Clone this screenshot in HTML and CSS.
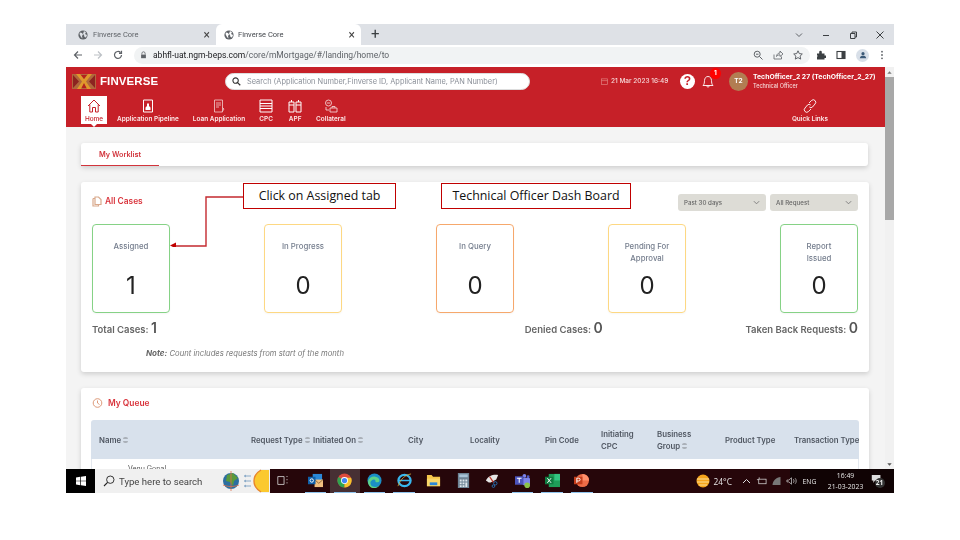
FILE: index.html
```html
<!DOCTYPE html>
<html lang="en">
<head>
<meta charset="utf-8">
<title>Finverse Core</title>
<link rel="stylesheet" href="styles.css">
</head>
<body>
<div class="slide">
  <div class="window">
    <div class="tabstrip">
      <div class="tab">
        <svg class="globe" viewBox="0 0 10 10"><circle cx="5" cy="5" r="4.6" fill="#5f6368"/><path d="M2 2.500l2 .5 1 1.500-1 1.500.5 2.500-1.500-1.500-1.500-3zM6 1l2 1.500-1 1.500 2 1-1 2.500-1.500-.5-.5-2-1-1z" fill="#dee1e6"/></svg>
        <span class="tabtitle">Finverse Core</span><span class="tabx">×</span>
      </div>
      <div class="tab tab-active">
        <svg class="globe" viewBox="0 0 10 10"><circle cx="5" cy="5" r="4.6" fill="#5f6368"/><path d="M2 2.500l2 .5 1 1.500-1 1.500.5 2.500-1.500-1.500-1.500-3zM6 1l2 1.500-1 1.500 2 1-1 2.500-1.500-.5-.5-2-1-1z" fill="#fff"/></svg>
        <span class="tabtitle">Finverse Core</span><span class="tabx">×</span>
      </div>
      <span class="newtab">+</span>
      <div class="winctl">
        <svg viewBox="0 0 10 10"><path d="M2 3.500l3 3 3-3" fill="none" stroke="#5f6368"/></svg>
        <svg viewBox="0 0 10 10"><path d="M2 5.500h6" stroke="#3c4043"/></svg>
        <svg viewBox="0 0 10 10"><path d="M2.500 3.500h4.500v5h-4.500zM4 3.500v-1.500h4.500v5h-1.500" fill="none" stroke="#3c4043"/></svg>
        <svg viewBox="0 0 10 10"><path d="M1.500 1.500l7 7M8.500 1.500l-7 7" stroke="#3c4043"/></svg>
      </div>
    </div>
    <div class="toolbar">
      <svg class="tb" viewBox="0 0 10 10"><path d="M9 5H1.500M5 1.500L1.500 5 5 8.500" fill="none" stroke="#5f6368" stroke-width="1.200"/></svg>
      <svg class="tb" viewBox="0 0 10 10"><path d="M1 5h7.500M5 1.500L8.500 5 5 8.500" fill="none" stroke="#bdc1c6" stroke-width="1.200"/></svg>
      <svg class="tb" viewBox="0 0 10 10"><path d="M8.500 5A3.500 3.500 0 1 1 7.500 2.500M8.500 .8v2.500H6" fill="none" stroke="#5f6368" stroke-width="1.200"/></svg>
      <div class="omnibox">
        <svg class="lock" viewBox="0 0 8 10"><path d="M2 4.500V3a2 2 0 0 1 4 0v1.500" fill="none" stroke="#5f6368"/><rect x="1" y="4.500" width="6" height="4.500" fill="#5f6368"/></svg>
        <span class="url"><b>abhfl-uat.ngm-beps.com</b>/core/mMortgage/#/landing/home/to</span>
        <span class="omni-icons">
          <svg viewBox="0 0 10 10"><circle cx="4.200" cy="4.200" r="3" fill="none" stroke="#5f6368"/><path d="M6.500 6.500l3 3M3 4.200h2.500" stroke="#5f6368"/></svg>
          <svg viewBox="0 0 10 10"><path d="M1 4.500v4.500h7.500V6.500M3.500 6.500c0-2.500 2-3.500 3.500-3.500V1l3 3-3 2.500V4.800c-1.500 0-2.500.5-3.500 1.700z" fill="none" stroke="#5f6368" stroke-width=".8"/></svg>
          <svg viewBox="0 0 10 10"><path d="M5 .8l1.300 2.800 3 .4-2.200 2.100.6 3L5 7.600 2.300 9.100l.6-3L.7 4l3-.4z" fill="none" stroke="#5f6368"/></svg>
        </span>
      </div>
      <div class="ext-icons">
        <svg viewBox="0 0 10 10"><path d="M1 3.500h2.200V2a1.300 1.300 0 0 1 2.600 0v1.500H8.500v2H10V8H8.500v1.500H1V7a1.300 1.300 0 0 0 0-2z" fill="#3c4043"/></svg>
        <svg viewBox="0 0 10 10"><rect x="1" y="1.500" width="8" height="7" fill="none" stroke="#3c4043" stroke-width="1.100"/><rect x="5.500" y="1.500" width="3.500" height="7" fill="#3c4043"/></svg>
        <span class="profile"><svg viewBox="0 0 10 10"><circle cx="5" cy="3.300" r="2" fill="#3c5a78"/><path d="M1 9c.3-2.500 2-3 4-3s3.700.5 4 3z" fill="#3c5a78"/></svg></span>
        <svg viewBox="0 0 10 10"><circle cx="5" cy="1.700" r=".9" fill="#5f6368"/><circle cx="5" cy="5" r=".9" fill="#5f6368"/><circle cx="5" cy="8.300" r=".9" fill="#5f6368"/></svg>
      </div>
    </div>

    <div class="viewport">
      <div class="page">
        <header class="apphead">
          <div class="headtop">
            <svg class="logo" viewBox="0 0 24 15"><rect width="24" height="15" fill="#b0683c"/><path d="M1 1l6 6.500L1 14zM23 1l-6 6.500 6 6.500z" fill="#8c2420"/><path d="M4 0h4l4 5 4-5h4l-6 7.500 5 7.500h-4l-3-5-3 5H5l5-7.500z" fill="#e0982c"/><path d="M9 1l3 4 3-4zM12 9l-2.500 5h5z" fill="#b3221e"/></svg>
            <span class="brand">FINVERSE</span>
            <div class="search">
              <svg viewBox="0 0 10 10"><circle cx="4" cy="4" r="3" fill="none" stroke="#333" stroke-width="1.200"/><path d="M6.200 6.200l3 3" stroke="#333" stroke-width="1.400"/></svg>
              <span>Search (Application Number,Finverse ID, Applicant Name, PAN Number)</span>
            </div>
            <div class="headright">
              <svg class="cal" viewBox="0 0 8 8"><rect x=".5" y="1" width="7" height="6.500" fill="none" stroke="#e2827f" stroke-width=".8"/><path d="M.5 3h7" stroke="#e2827f" stroke-width=".8"/></svg>
              <span class="datetime">21 Mar 2023 16:49</span>
              <span class="help">?</span>
              <span class="bell">
                <svg viewBox="0 0 12 14"><path d="M1 11.500c1.500-1.500 1.300-3 1.500-5C2.700 4 4 2.500 6 2.500S9.300 4 9.500 6.500c.2 2 0 3.500 1.500 5zM4.700 11.500c0 2 2.600 2 2.600 0" fill="none" stroke="#fff" stroke-width=".9"/></svg>
                <span class="badge">1</span>
              </span>
              <span class="avatar">T2</span>
              <div class="user">
                <div class="uname">TechOfficer_2 27 (TechOfficer_2_27)</div>
                <div class="urole">Technical Officer</div>
              </div>
            </div>
          </div>
          <nav class="nav">
            <a class="navitem navhome">
              <svg viewBox="0 0 14 14"><path d="M1 7l6-6 6 6M2.800 5.500V13H5.500V8.500h3V13h2.700V5.500" fill="none" stroke="#c62028" stroke-width="1"/></svg>
              <span>Home</span>
            </a>
            <a class="navitem">
              <svg viewBox="0 0 12 14"><path d="M1.500 1h9v12h-9z" fill="none" stroke="#fff"/><path d="M3.500 11h5V8.500L7 7V4.500H5V7L3.500 8.500z" fill="#fff"/></svg>
              <span>Application Pipeline</span>
            </a>
            <a class="navitem">
              <svg viewBox="0 0 12 14"><path d="M1.500 1h8v12h-8zM3 4h5M3 6h5M3 8h3" fill="none" stroke="#eebcbc" stroke-width=".9"/><path d="M9 8l2 2-2 3" fill="none" stroke="#eebcbc" stroke-width=".9"/></svg>
              <span>Loan Application</span>
            </a>
            <a class="navitem">
              <svg viewBox="0 0 14 14"><path d="M1 1h12v12H1zM1 4.500h12M1 7h12M1 9.500h12" fill="none" stroke="#fff"/></svg>
              <span>CPC</span>
            </a>
            <a class="navitem">
              <svg viewBox="0 0 14 14"><path d="M1 3h5v10H1zM8 3h5v10H8zM1 6h5M8 6h5M3.500 1v2M10.500 1v2" fill="none" stroke="#fff"/></svg>
              <span>APF</span>
            </a>
            <a class="navitem">
              <svg viewBox="0 0 14 14"><circle cx="4.500" cy="4" r="3" fill="none" stroke="#f2d0d0" stroke-width=".9"/><path d="M3 4h3M6 9h7v4H6zM2 8v3h3M8 9V7.500h3V9" fill="none" stroke="#f2d0d0" stroke-width=".9"/></svg>
              <span>Collateral</span>
            </a>
            <a class="navitem navquick">
              <svg viewBox="0 0 14 14"><path d="M6 4l2.500-2.500a2.300 2.300 0 0 1 3.500 3.500L9.500 8a2.300 2.300 0 0 1-3.200 0M8 10l-2.500 2.500A2.300 2.300 0 0 1 2 9l2.500-3a2.300 2.300 0 0 1 3.200 0" fill="none" stroke="#fff" stroke-width=".9"/></svg>
              <span>Quick Links</span>
            </a>
          </nav>
        </header>

        <main class="content">
          <div class="card worklist"><span class="wltab">My Worklist</span></div>

          <section class="card cases">
            <div class="caseshead">
              <svg class="cardicon" viewBox="0 0 10 11"><path d="M1 2.500h1.500M1 2.500V10h5.500V8.500M3 1h3.500L9 3.500v5H3z" fill="none" stroke="#d9a98c" stroke-width="1.200"/></svg>
              <h2 class="cardtitle">All Cases</h2>
              <div class="selects">
                <div class="select"><span>Past 30 days</span><svg viewBox="0 0 8 8"><path d="M1 2.500l3 3 3-3" fill="none" stroke="#777"/></svg></div>
                <div class="select"><span>All Request</span><svg viewBox="0 0 8 8"><path d="M1 2.500l3 3 3-3" fill="none" stroke="#777"/></svg></div>
              </div>
            </div>
            <div class="tiles">
              <div class="tile green"><div class="tlabel">Assigned</div><div class="tnum">1</div></div>
              <div class="tile yellow"><div class="tlabel">In Progress</div><div class="tnum">0</div></div>
              <div class="tile orange"><div class="tlabel">In Query</div><div class="tnum">0</div></div>
              <div class="tile yellow"><div class="tlabel">Pending For Approval</div><div class="tnum">0</div></div>
              <div class="tile green"><div class="tlabel tnarrow">Report Issued</div><div class="tnum">0</div></div>
            </div>
            <div class="totals">
              <div>Total Cases: <b>1</b></div>
              <div class="tr">Denied Cases: <b>0</b></div>
              <div class="tr">Taken Back Requests: <b>0</b></div>
            </div>
            <p class="note"><b>Note:</b> Count includes requests from start of the month</p>
          </section>

          <section class="card queue">
            <div class="queuehead">
              <svg class="cardicon" viewBox="0 0 10 10"><circle cx="5" cy="5" r="4.300" fill="none" stroke="#d9906c" stroke-width=".9"/><path d="M5 2.500V5l2 1.500" fill="none" stroke="#d9906c" stroke-width=".9"/></svg>
              <h2 class="cardtitle">My Queue</h2>
            </div>
            <div class="qtable">
              <div class="qrow">
                <span>Name <i class="sort"></i></span>
                <span>Request Type <i class="sort"></i></span>
                <span>Initiated On <i class="sort"></i></span>
                <span>City</span>
                <span>Locality</span>
                <span>Pin Code</span>
                <span>Initiating<br>CPC</span>
                <span>Business<br>Group <i class="sort"></i></span>
                <span>Product Type</span>
                <span>Transaction Type</span>
              </div>
              <div class="qbody">Venu Gopal</div>
            </div>
          </section>
        </main>
      </div>
      <div class="scrollbar">
        <svg viewBox="0 0 8 8"><path d="M1.500 5.500L4 2.500l2.500 3z" fill="#777"/></svg>
        <div class="thumb"></div>
        <svg class="scrolldown" viewBox="0 0 8 8"><path d="M1.500 2.500L4 5.500l2.500-3z" fill="#555"/></svg>
      </div>
    </div>

    <footer class="taskbar">
      <div class="start"><svg viewBox="0 0 10 10"><path d="M0 1.400l4.300-.6v3.900H0zM5 .7L10 0v4.700H5zM0 5.300h4.300v3.900L0 8.600zM5 5.300h5V10l-5-.7z" fill="#fff"/></svg></div>
      <div class="tsearch">
        <svg class="tglass" viewBox="0 0 12 12"><circle cx="7.300" cy="4.700" r="3.700" fill="none" stroke="#222" stroke-width=".9"/><path d="M4.600 7.400L1 11" stroke="#222" stroke-width="1.100"/></svg>
        <span class="tstext">Type here to search</span>
        <svg class="tglobe" viewBox="0 0 48 22"><circle cx="10" cy="11" r="8" fill="#2c6fa0"/><path d="M6 5l6-2 5 5-4 3-1 5-3-4-4-1z" fill="#5a9a3c"/><path d="M10 1v20M2 15c5 2 11 2 16 0" stroke="#e0704a" stroke-width=".8" fill="none"/><path d="M30 6h-7M30 11h-7M30 16h-7" stroke="#8aa9c8" stroke-width="1.200"/><path d="M23 6l2-1.500v3zM23 11l2-1.500v3zM23 16l2-1.500v3z" fill="#8aa9c8"/><path d="M48 0H40C35 3 33 7 33 11s2 8 7 11h8z" fill="#fbc92e"/><path d="M40 0C35 3 33 7 33 11s2 8 7 11" fill="none" stroke="#e8852c" stroke-width="1.400"/></svg>
      </div>
      <div class="tapps">
        <span class="tapp taskview"><svg viewBox="0 0 14 14"><path d="M1 2h8v10H1zM12 2h1.500M12 6h1.500M12 10h1.500" fill="none" stroke="#ddd" stroke-width="1"/></svg></span>
        <span class="tapp run"><svg viewBox="0 0 16 16"><rect x="5" y="1" width="10" height="8" fill="#2a88d8"/><rect x="7" y="7" width="9" height="8" fill="#f0c080"/><path d="M7 7l4.500 4L16 7" fill="none" stroke="#8c6a3c"/><rect x="0" y="4" width="8" height="8" fill="#0f5fa8"/><circle cx="4" cy="8" r="1.800" fill="none" stroke="#fff"/></svg></span>
        <span class="tapp run active"><svg viewBox="0 0 16 16"><circle cx="8" cy="8" r="7.500" fill="#dd4b3c"/><path d="M8 8L1.500 4.200A7.500 7.500 0 0 0 8 15.500z" fill="#2ea44f"/><path d="M8 8v7.500A7.500 7.500 0 0 0 15 5H8z" fill="#f6c32c"/><circle cx="8" cy="8" r="3.700" fill="#fff"/><circle cx="8" cy="8" r="2.800" fill="#3f85f4"/></svg></span>
        <span class="tapp run"><svg viewBox="0 0 16 16"><circle cx="8" cy="8" r="7.500" fill="#1b8fc6"/><path d="M1 9c1-4 5-6 8-5 3 .5 5 3 4 5-1 1.500-4 1-4 0 .5-1.500-2-3-4-1-2 1-2 5 1 6.500 2 .8 5 .5 7-1-2 2.500-5 3-7 2.500C3 15.500 1 12 1 9z" fill="#5cd38a"/></svg></span>
        <span class="tapp run"><svg viewBox="0 0 16 16"><ellipse cx="8" cy="8" rx="6.500" ry="6" fill="none" stroke="#38b7ee" stroke-width="2.400"/><path d="M2 8h12" stroke="#38b7ee" stroke-width="1.600"/><path d="M1 14c3-8 8-12 14-13" fill="none" stroke="#e2b53c" stroke-width=".8"/></svg></span>
        <span class="tapp"><svg viewBox="0 0 16 16"><path d="M1 2h5l1.500 2H15v10H1z" fill="#f5c64a"/><rect x="1" y="6" width="14" height="8" fill="#fbd869"/><rect x="4" y="10" width="8" height="3" fill="#2a88d8"/></svg></span>
        <span class="tapp"><svg viewBox="0 0 14 16"><rect x="1" y="0" width="12" height="16" fill="#6f8596"/><rect x="2.500" y="1.500" width="9" height="3" fill="#a8c4d8"/><path d="M3 7h2v2H3zM6 7h2v2H6zM9 7h2v2H9zM3 10h2v2H3zM6 10h2v2H6zM9 10h2v5H9zM3 13h2v2H3zM6 13h2v2H6z" fill="#dfe7ec"/></svg></span>
        <span class="tapp"><svg viewBox="0 0 16 16"><path d="M1 8c2-5 8-7 13-6l-2 5-6 3-2 0z" fill="#e6e6e6"/><path d="M5 4l4 6" stroke="#c0392b" stroke-width="1.400"/><circle cx="11" cy="11" r="1.800" fill="none" stroke="#2a6fb0"/><circle cx="9" cy="14" r="1.400" fill="none" stroke="#2a6fb0"/></svg></span>
        <span class="tapp run"><svg viewBox="0 0 16 16"><circle cx="10" cy="3" r="2" fill="#7b83eb"/><circle cx="14" cy="4" r="1.500" fill="#5059c9"/><rect x="8" y="5" width="8" height="8" rx="1.500" fill="#7b83eb"/><rect x="0" y="3.500" width="9" height="9" fill="#4b53bc"/><path d="M2 5.500h5M4.500 5.500v5" stroke="#fff" stroke-width="1.100"/><circle cx="13" cy="13" r="3" fill="#8bc34a"/></svg></span>
        <span class="tapp run"><svg viewBox="0 0 16 16"><rect x="4" y="1" width="12" height="14" fill="#1f9d58"/><path d="M10 1h6v7h-6z" fill="#33c481"/><rect x="0" y="4" width="9" height="8" fill="#107c41"/><path d="M2.500 5.500l4 5M6.500 5.500l-4 5" stroke="#fff"/></svg></span>
        <span class="tapp run"><svg viewBox="0 0 16 16"><circle cx="9" cy="8" r="7" fill="#ed6c47"/><path d="M9 1a7 7 0 0 1 7 7H9z" fill="#ff8f6b"/><rect x="0" y="4" width="9" height="8" fill="#c43e1c"/><path d="M3 10.500V5.500h2a1.500 1.500 0 0 1 0 3H3" fill="none" stroke="#fff"/></svg></span>
      </div>
      <div class="ttray">
        <svg class="tsun" viewBox="0 0 14 14"><circle cx="7" cy="7" r="6.500" fill="#f6a41c"/><path d="M1 5h12M1 8h12M3 11h8" stroke="#fbe6a8" stroke-width=".9"/></svg>
        <span class="ttemp">24°C</span>
        <svg class="ticon" viewBox="0 0 10 10"><path d="M1.500 7L5 3.500 8.500 7" fill="none" stroke="#ddd"/></svg>
        <svg class="ticon" viewBox="0 0 12 10"><rect x="3" y="3" width="8" height="5" fill="none" stroke="#ddd" stroke-width=".8"/><path d="M3.500 1v2M1 3.500h2" stroke="#ddd" stroke-width=".8"/></svg>
        <svg class="ticon" viewBox="0 0 10 10"><path d="M1 9C1 5 5 1 9 1v8z" fill="#777"/></svg>
        <svg class="ticon" viewBox="0 0 12 10"><path d="M1 4h2l3-2.500v7L3 6H1zM8 3c1 1 1 3 0 4M10 2c1.500 1.500 1.500 4.500 0 6" fill="none" stroke="#ccc" stroke-width=".8"/></svg>
        <span class="tlang">ENG</span>
        <div class="tclock"><div>16:49</div><div>21-03-2023</div></div>
        <span class="tnotif">
          <svg viewBox="0 0 14 12"><path d="M1 1h11v7H5l-2 3V8H1z" fill="#ddd"/></svg>
          <span class="tcount">21</span>
        </span>
      </div>
    </footer>
  </div>

  <div class="callout callout-a">Click on Assigned tab</div>
  <div class="callout callout-b">Technical Officer Dash Board</div>
  <svg class="leader" viewBox="0 0 75 51"><path d="M74 1H37v49H6" fill="none" stroke="#c42a2f" stroke-width="1.400"/><path d="M1 49.500l6-3v6z" fill="#c00000"/></svg>
</div>
</body>
</html>
```

FILE: styles.css
```css
* { box-sizing: border-box; }
html, body { margin: 0; padding: 0; }
body { width: 960px; height: 540px; overflow: hidden; background: #fff; font-family: "Inter", "Liberation Sans", sans-serif; }
svg { display: block; flex: none; }

.slide { position: relative; width: 960px; height: 540px; padding: 24px 66px 47px; }
.window { width: 828px; height: 469px; display: flex; flex-direction: column; overflow: hidden; filter: blur(.45px); background: #fff; }

/* browser chrome */
.tabstrip { height: 21px; background: #dee1e6; display: flex; align-items: flex-end; flex: none; }
.tab { width: 150px; height: 21px; display: flex; align-items: center; padding: 0 6px 0 12px; gap: 5px; color: #5f6368; font: 7.500px "Roboto", sans-serif; }
.tab-active { width: 145px; padding-left: 8px; gap: 4px; background: #fff; border-radius: 6px 6px 0 0; color: #45494e; }
.globe { width: 10px; height: 10px; }
.tabtitle { flex: 1; }
.tabx { font-size: 12px; color: #444; line-height: 1; }
.newtab { font: 15px "Roboto", sans-serif; color: #3c4043; margin-left: 10px; height: 21px; line-height: 21px; }
.winctl { margin-left: auto; height: 21px; display: flex; align-items: center; gap: 17px; padding-right: 9px; }
.winctl svg { width: 10px; height: 10px; }
.toolbar { height: 22px; background: #fff; display: flex; align-items: center; flex: none; padding: 0 0 2px 7px; }
.tb { width: 10px; height: 10px; margin-right: 10px; }
.omnibox { margin-left: 1px; width: 676px; height: 17px; border-radius: 9px; background: #f1f3f4; display: flex; align-items: center; padding: 0 7px 0 6px; }
.lock { width: 7px; height: 8px; margin-right: 6px; }
.url { font: 8.500px "Roboto", sans-serif; color: #5f6368; white-space: nowrap; }
.url b { font-weight: 400; color: #202124; }
.omni-icons { margin-left: auto; display: flex; gap: 10px; }
.omni-icons svg { width: 10px; height: 10px; }
.ext-icons { display: flex; align-items: center; margin-left: 6px; gap: 10px; }
.ext-icons svg { width: 10px; height: 10px; }
.profile { width: 13px; height: 13px; margin-right: -2px; border-radius: 50%; background: #d8dfe8; display: flex; align-items: center; justify-content: center; }
.profile svg { width: 8px; height: 8px; }

.viewport { flex: 1; min-height: 0; display: flex; overflow: hidden; background: #f4f4f4; }
.page { flex: 1; min-width: 0; display: flex; flex-direction: column; }

/* app header */
.apphead { height: 60px; background: #c62028; flex: none; color: #fff; }
.headtop { height: 28px; display: flex; align-items: center; padding-left: 6px; }
.logo { width: 24px; height: 15px; }
.brand { font: 700 11.500px "Liberation Sans", sans-serif; margin-left: 4px; width: 125px; letter-spacing: .1px; }
.search { width: 305px; height: 17px; background: #fff; border-radius: 9px; border: 1px solid #ddd; display: flex; align-items: center; padding-left: 6px; gap: 6px; color: #8a8f98; font-size: 7.400px; white-space: nowrap; }
.search svg { width: 9px; height: 9px; }
.headright { flex: 1; display: flex; align-items: center; padding-left: 71px; }
.cal { width: 7px; height: 7px; margin-right: 3px; }
.datetime { font-size: 6.500px; font-weight: 500; color: #f6d8d8; width: 64px; white-space: nowrap; }
.help { width: 15px; height: 15px; border-radius: 50%; background: #fff; color: #c62028; font: 700 12px/15px "Liberation Sans", sans-serif; text-align: center; margin-left: 5px; }
.bell { position: relative; width: 14px; height: 14px; margin-left: 7px; }
.bell svg { width: 12px; height: 14px; }
.badge { position: absolute; top: -6px; right: -5px; width: 11px; height: 11px; border-radius: 50%; background: #f00; font-size: 6.500px; font-weight: 700; line-height: 11px; text-align: center; color: #fff; }
.avatar { width: 19px; height: 19px; margin-left: 13px; border-radius: 50%; background: #b27d52; font-size: 6.500px; font-weight: 700; line-height: 19px; text-align: center; }
.user { margin-left: 5px; white-space: nowrap; }
.uname { font-size: 6.850px; font-weight: 700; line-height: 9px; }
.urole { font-size: 5.500px; font-weight: 500; line-height: 9px; margin-top: 1px; color: #f6d8d8; }
.nav { height: 32px; display: flex; align-items: flex-start; padding-left: 15px; gap: 10px; }
.navitem { display: flex; flex-direction: column; align-items: center; padding-top: 4px; gap: 2px; font-size: 6.450px; font-weight: 600; color: #fce8e8; white-space: nowrap; }
.navitem svg { width: 14px; height: 14px; }
.navhome { position: relative; width: 26px; height: 28px; background: #fff; color: #c62028; margin-top: 1px; margin-right: 0; font-weight: 500; padding-top: 3px; }
.navhome::after { content: ""; position: absolute; left: 10px; bottom: -3px; border: 3px solid transparent; border-bottom: 0; border-top-color: #fff; }
.navquick { margin-left: auto; margin-right: 57px; }
.navitem:nth-child(3) { margin-left: 4px; }
.navitem:nth-child(4) { margin-left: 4px; }
.navitem:nth-child(5) { margin-left: 5px; }
.navitem:nth-child(6) { margin-left: 4px; }

/* content */
.content { flex: 1; min-height: 0; overflow: hidden; padding: 16px 16px 0 15px; display: flex; flex-direction: column; gap: 16px; }
.card { background: #fff; border-radius: 3px; box-shadow: 0 2px 5px rgba(0,0,0,.16); flex: none; }
.worklist { height: 23px; margin-right: 1px; display: flex; margin-bottom: 0; }
.wltab { width: 78px; text-align: center; font-size: 7.300px; font-weight: 600; color: #d2343c; line-height: 23px; border-bottom: 1px solid #d2343c; }
.cases { height: 190px; padding: 12px 11px 0; }
.caseshead { display: flex; align-items: flex-start; height: 18px; }
.cardicon { width: 10px; height: 11px; margin-right: 3px; }
.cases .cardicon { margin-top: 2px; }
.cardtitle { margin: 0; font-size: 8.400px; line-height: 14px; font-weight: 600; color: #d9343c; }
.selects { margin-left: auto; display: flex; gap: 4px; }
.select { width: 88px; height: 17px; border-radius: 3px; background: #dddcd6; display: flex; align-items: center; justify-content: space-between; padding: 0 6px; font-size: 6.200px; font-weight: 500; color: #666; }
.select svg { width: 7px; height: 7px; }
.tiles { display: flex; justify-content: space-between; margin-top: 12px; }
.tile { width: 78px; height: 89px; border-radius: 4px; border: 1px solid; text-align: center; display: flex; flex-direction: column; box-shadow: 0 1px 2px rgba(0,0,0,.04); }
.green { border-color: #86d286; }
.yellow { border-color: #fdd883; }
.orange { border-color: #f6a86c; }
.tlabel { height: 49px; padding: 15px 10px 0; font-size: 7.800px; line-height: 12px; font-weight: 500; color: #737c8c; }
.tnarrow { padding: 15px 20px 0; }
.tnum { font-size: 24px; font-weight: 400; color: #222; line-height: 24px; margin-top: 0; }
.totals { display: grid; grid-template-columns: repeat(3, 1fr); margin-top: 7px; font-size: 9.500px; font-weight: 600; color: #666; line-height: 16px; }
.totals b { font-size: 14px; font-weight: 600; color: #555; }
.tr { text-align: right; }
.note { margin: 10px 0 0 54px; font-size: 7.700px; font-style: italic; color: #777; line-height: 10px; }
.note b { font-weight: 700; color: #666; font-size: 8px; }
.queue { height: 120px; padding: 8px 10px 0; }
.queuehead { display: flex; align-items: center; height: 14px; margin-bottom: 10px; padding-left: 1px; }
.queuehead .cardicon { height: 10px; width: 11px; margin-right: 5px; }
.qtable { border-radius: 3px 3px 0 0; }
.qrow { height: 39px; background: #d8e1ec; border-radius: 3px 3px 0 0; display: grid; grid-template-columns: 152px 62px 95px 62px 75px 56px 56px 68px 69px 1fr; align-items: center; padding-left: 8px; font-size: 7.800px; font-weight: 600; line-height: 12px; color: #4f5661; white-space: nowrap; }
.sort { display: inline-block; width: 5px; height: 6px; vertical-align: -0.500px; background: linear-gradient(#aab0b8 0 40%, transparent 40% 60%, #aab0b8 60%); border-radius: 2px; }
.qbody { border: 1px solid #e4e8ee; border-top: 0; height: 30px; padding: 5px 0 0 36px; font-size: 7px; color: #555; }

.scrollbar { width: 9px; flex: none; background: #f1f1f1; display: flex; flex-direction: column; align-items: center; }
.scrollbar svg { width: 7px; height: 7px; margin-top: 2px; }
.thumb { width: 9px; height: 143px; background: #a8a8a8; margin-top: 1px; }
.scrolldown { margin-top: auto !important; margin-bottom: 1px; }

/* taskbar */
.taskbar { height: 24px; flex: none; display: flex; background: #26060a; color: #e6e6e6; position: relative; z-index: 1; }
.start { width: 29px; background: #000; display: flex; align-items: center; justify-content: center; }
.start svg { width: 10px; height: 10px; }
.tsearch { width: 175px; background: #f0f0f0; display: flex; align-items: center; color: #444; font: 9.600px "Roboto", sans-serif; padding-left: 8px; overflow: hidden; }
.tglass { width: 12px; height: 12px; margin-right: 4px; }
.tstext { width: 102px; white-space: nowrap; }
.tglobe { width: 48px; height: 24px; margin-left: 0; }
.tapps { display: flex; padding-left: 1px; }
.tapp { width: 29.600px; height: 24px; display: flex; align-items: center; justify-content: center; padding-bottom: 2px; position: relative; }
.tapp svg { width: 15px; height: 15px; }
.tapp.taskview svg { width: 11px; height: 11px; margin-right: 6px; }
.tapp.run::after { content: ""; position: absolute; left: 4px; right: 4px; bottom: 0; height: 1.500px; background: #8fc4ee; }
.tapp.active { background: #473034; }
.ttray { flex: 1; display: flex; align-items: center; padding-left: 99px; font: 8.400px "Open Sans", sans-serif; min-width: 0; background: linear-gradient(90deg, #26060a calc(100% - 104px), #100304 calc(100% - 104px)); }
.tsun { width: 14px; height: 14px; margin-right: 4px; }
.ttemp { width: 23px; white-space: nowrap; }
.ticon { width: 11px; height: 10px; margin-left: 4px; }
.tlang { margin-left: 6px; font-size: 6.800px; width: 18px; }
.tclock { width: 50px; text-align: center; font-size: 6.800px; line-height: 11px; margin-left: 0; }
.tnotif { position: relative; width: 14px; height: 14px; margin-left: 0; }
.tnotif svg { width: 11px; height: 10px; }
.tcount { position: absolute; left: 4px; top: 4px; width: 10px; height: 10px; border-radius: 50%; background: #333; color: #eee; font-size: 6.500px; font-weight: 700; line-height: 10px; text-align: center; }

/* slide annotations */
.callout { position: absolute; height: 26px; background: #fff; border: 1.500px solid #c00000; color: #111; font: 12.400px/24px "Open Sans", sans-serif; text-align: center; white-space: nowrap; }
.callout-a { left: 243px; top: 183px; width: 153px; }
.callout-b { left: 441px; top: 183px; width: 190px; }
.leader { position: absolute; left: 169px; top: 196px; width: 75px; height: 51px; }
```
